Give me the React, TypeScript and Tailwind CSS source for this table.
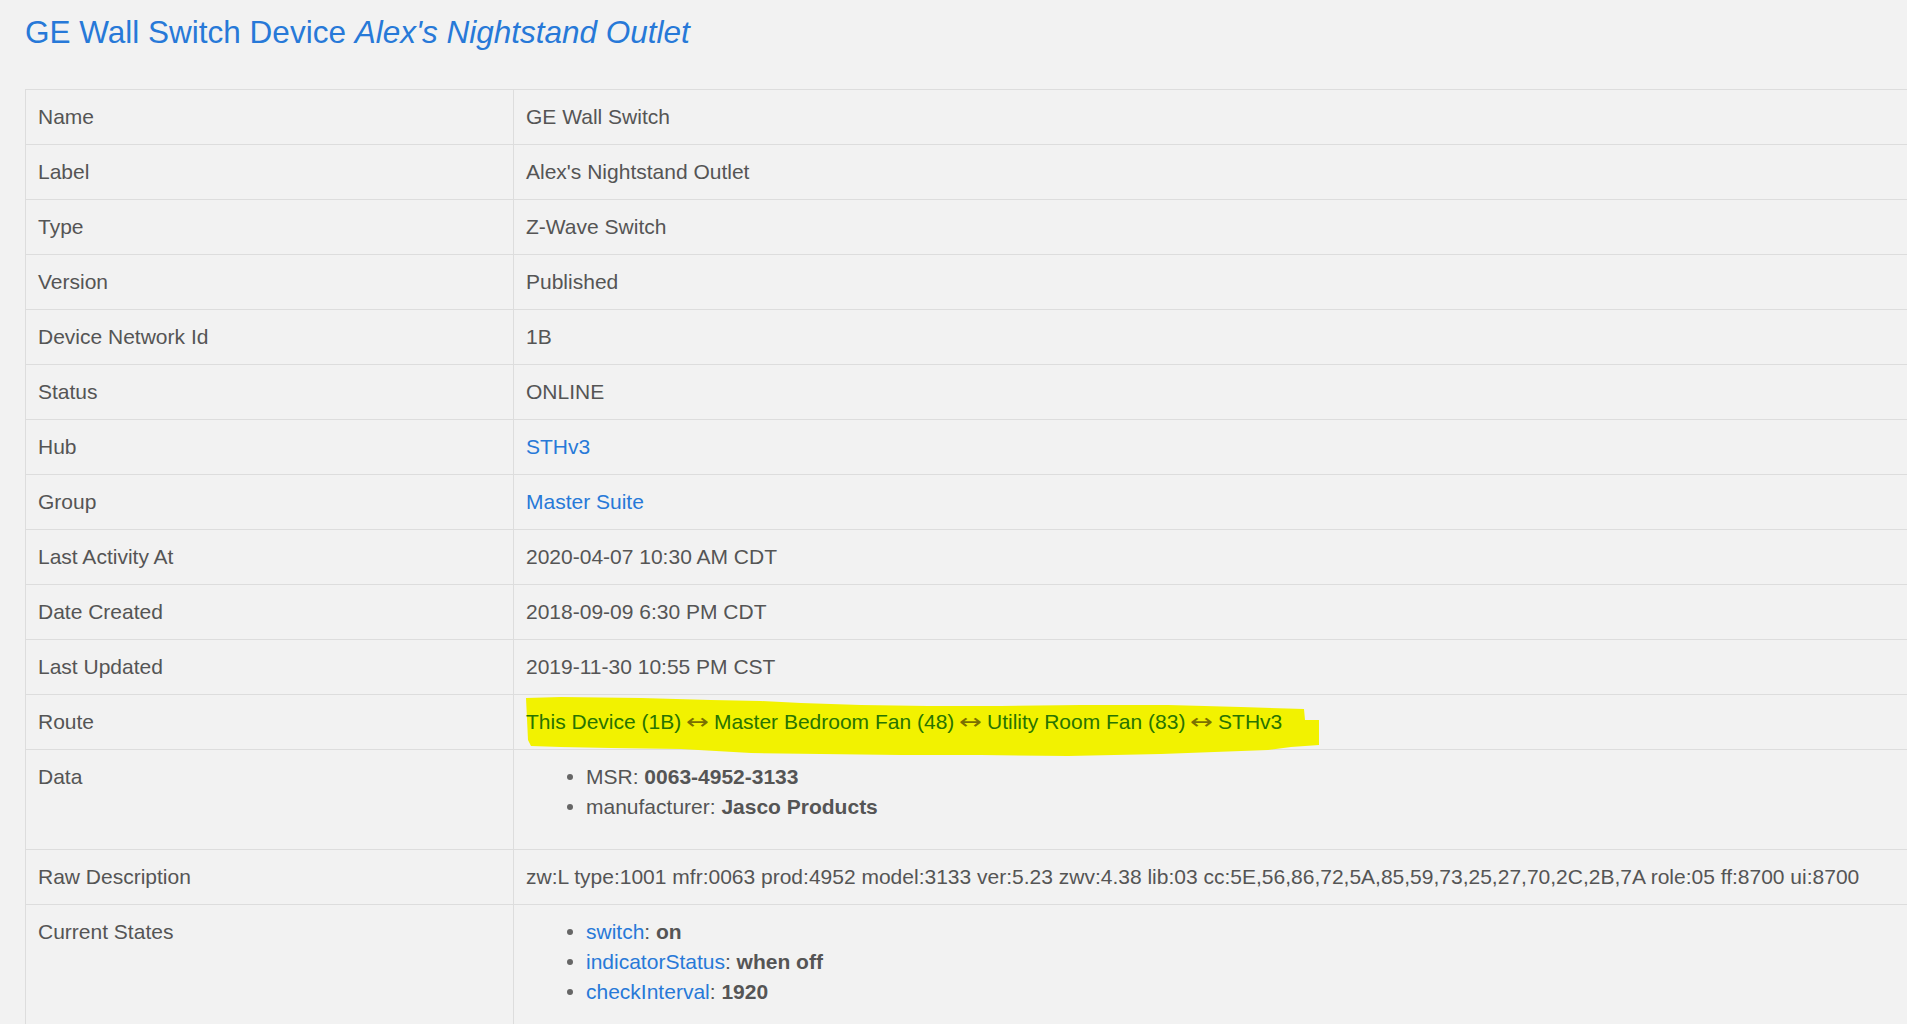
import React from "react";

const font = { fontFamily: '"Liberation Sans", Arial, Helvetica, sans-serif' };

type Row = { label: string; value: React.ReactNode; tall?: boolean };

const Link = ({ children }: { children: React.ReactNode }) => (
  <span className="text-[#2779d8]">{children}</span>
);

const Bullets = ({ items }: { items: React.ReactNode[] }) => (
  <ul className="mb-[15px]">
    {items.map((it, i) => (
      <li key={i} className="flex items-center h-[30px]">
        <span className="ml-[41px] w-[6px] h-[6px] rounded-full bg-[#666] shrink-0" />
        <span className="ml-[13px] whitespace-nowrap">{it}</span>
      </li>
    ))}
  </ul>
);

const Arrow = () => (
  <span className="text-[#7a6f00]">
    {" "}
    <span
      className="inline-block w-[21px] text-center scale-x-[1.3]"
      style={{ fontFamily: '"DejaVu Sans", sans-serif' }}
    >
      ↔
    </span>{" "}
  </span>
);

const Route = () => (
  <div className="relative">
    <svg
      className="absolute left-[-13px] top-[-19px] overflow-visible"
      width="1400"
      height="70"
      viewBox="512 680 1400 70"
    >
      <path
        d="M525,690 L560,689 L640,690 L710,692 L760,693 L800,695 L860,697 L927,698 L1000,698 L1080,697 L1167,697 L1240,699 L1303,701 L1304,712 L1318,712 L1318,737 L1290,739 L1267,742 L1160,746 L1067,748 L980,747 L900,747 L820,746 L750,745 L680,741 L610,740 L560,739 L530,738 L527,732 Z"
        fill="#f2f200"
      />
    </svg>
    <span className="relative text-[#287400] whitespace-nowrap">
      This Device (1B)
      <Arrow />
      Master Bedroom Fan (48)
      <Arrow />
      Utility Room Fan (83)
      <Arrow />
      STHv3
    </span>
  </div>
);

const rows: Row[] = [
  { label: "Name", value: "GE Wall Switch" },
  { label: "Label", value: "Alex's Nightstand Outlet" },
  { label: "Type", value: "Z-Wave Switch" },
  { label: "Version", value: "Published" },
  { label: "Device Network Id", value: "1B" },
  { label: "Status", value: "ONLINE" },
  { label: "Hub", value: <Link>STHv3</Link> },
  { label: "Group", value: <Link>Master Suite</Link> },
  { label: "Last Activity At", value: "2020-04-07 10:30 AM CDT" },
  { label: "Date Created", value: "2018-09-09 6:30 PM CDT" },
  { label: "Last Updated", value: "2019-11-30 10:55 PM CST" },
  { label: "Route", value: <Route /> },
  {
    label: "Data",
    tall: true,
    value: (
      <Bullets
        items={[
          <>
            MSR: <b className="font-bold">0063-4952-3133</b>
          </>,
          <>
            manufacturer: <b className="font-bold">Jasco Products</b>
          </>,
        ]}
      />
    ),
  },
  {
    label: "Raw Description",
    value:
      "zw:L type:1001 mfr:0063 prod:4952 model:3133 ver:5.23 zwv:4.38 lib:03 cc:5E,56,86,72,5A,85,59,73,25,27,70,2C,2B,7A role:05 ff:8700 ui:8700",
  },
  {
    label: "Current States",
    tall: true,
    value: (
      <Bullets
        items={[
          <>
            <Link>switch</Link>: <b className="font-bold">on</b>
          </>,
          <>
            <Link>indicatorStatus</Link>: <b className="font-bold">when off</b>
          </>,
          <>
            <Link>checkInterval</Link>: <b className="font-bold">1920</b>
          </>,
        ]}
      />
    ),
  },
];

export default function App() {
  return (
    <div
      className="w-full h-screen overflow-hidden bg-[#f2f2f2] text-[#555] text-[21px]"
      style={font}
    >
      <div className="pl-[25px] pt-[15px]">
        <h1 className="text-[31.5px] leading-[34px] text-[#2779d8] font-normal whitespace-nowrap">
          GE Wall Switch Device <i>Alex's Nightstand Outlet</i>
        </h1>
        <div className="mt-[40px] w-[2000px] border-l border-[#dddddd]">
          {rows.map((r) => (
            <div
              key={r.label}
              className="grid grid-cols-[487px_1fr] border-t border-[#dddddd]"
            >
              <div className="px-[12px] pt-[12px] pb-[12px] leading-[30px]">{r.label}</div>
              <div className="border-l border-[#dddddd] px-[12px] pt-[12px] pb-[12px] leading-[30px] whitespace-nowrap">
                {r.value}
              </div>
            </div>
          ))}
        </div>
      </div>
    </div>
  );
}
